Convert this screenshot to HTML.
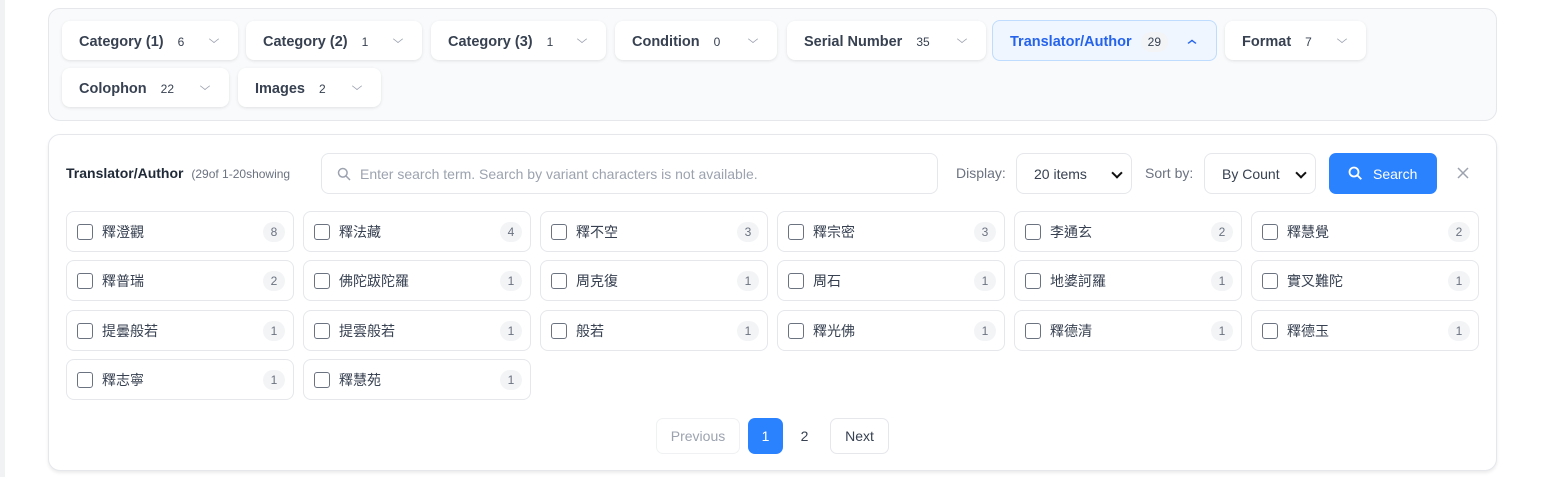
<!DOCTYPE html>
<html><head><meta charset="utf-8"><style>
*{box-sizing:border-box;margin:0;padding:0}
body{width:1541px;height:477px;background:#fff;font-family:"Liberation Sans","Noto Sans CJK TC",sans-serif;color:#374151;position:relative;overflow:hidden}
.strip{position:absolute;left:0;top:0;width:5px;height:477px;background:#f1f2f4}
.panel{position:absolute;left:48px;width:1449px;border:1px solid #e5e7eb;border-radius:12px}
.p1{top:8px;height:113px;background:#f8fafc}
.p2{top:134px;height:337px;background:#fff;box-shadow:0 2px 3px rgba(0,0,0,.08)}
.fb{position:absolute;height:39px;background:#fff;border-radius:8px;box-shadow:0 1px 3px rgba(0,0,0,.1);display:flex;align-items:center;padding-left:17px;padding-top:2px;font-size:14.5px;font-weight:bold;color:#374151}
.fb .n{font-size:12px;font-weight:normal;margin-left:14px;color:#374151}
.fb .c{position:absolute;right:20px;top:14px;width:8px;height:8px;border-right:1.5px solid #9ca3af;border-bottom:1.5px solid #9ca3af;transform:scale(.9,.7) rotate(45deg)}
.fb.act{background:#eff6ff;border:1px solid #bfdbfe;color:#2563eb;box-shadow:none}
.fb.act .n{background:#f3f4f6;border-radius:10px;padding:3px 7px;margin-left:9px;color:#374151}
.fb.act .c{border-color:#2563eb;border-width:2px;top:18px;transform:scale(.8,.6) rotate(225deg)}
.ab{position:absolute}
.inp{position:absolute;border:1px solid #e5e7eb;border-radius:8px;background:#fff;height:41px;top:153px;font-size:14px;color:#9ca3af;display:flex;align-items:center}
.sel{color:#374151;padding-left:11px}
.sel:after{content:"";position:absolute;right:10px;top:15px;width:6px;height:6px;border-right:2px solid #111;border-bottom:2px solid #111;transform:rotate(45deg)}
.cell{position:absolute;width:228px;height:41px;border:1px solid #e5e7eb;border-radius:8px;background:#fff;font-size:14px;color:#374151}
.cell .cb{position:absolute;left:10px;top:12px;width:16px;height:16px;border:1.3px solid #6b7280;border-radius:3px}
.cell .t{position:absolute;left:35px;top:10px}
.cell .b{position:absolute;right:8px;top:10px;width:22px;height:20px;border-radius:10px;background:#f3f4f6;font-size:12px;color:#6b7280;text-align:center;line-height:20px}
.pg{position:absolute;top:418px;height:36px;border-radius:7px;font-size:14px;display:flex;align-items:center;justify-content:center}
</style></head><body>
<div class="strip"></div>
<div class="panel p1"></div>
<div class="fb" style="left:62px;top:21px;width:176px">Category (1)<span class="n">6</span><span class="c"></span></div>
<div class="fb" style="left:246px;top:21px;width:176px">Category (2)<span class="n">1</span><span class="c"></span></div>
<div class="fb" style="left:431px;top:21px;width:175px">Category (3)<span class="n">1</span><span class="c"></span></div>
<div class="fb" style="left:615px;top:21px;width:162px">Condition<span class="n">0</span><span class="c"></span></div>
<div class="fb" style="left:787px;top:21px;width:199px">Serial Number<span class="n">35</span><span class="c"></span></div>
<div class="fb act" style="left:992px;top:20px;width:225px;height:41px">Translator/Author<span class="n">29</span><span class="c"></span></div>
<div class="fb" style="left:1225px;top:21px;width:141px">Format<span class="n">7</span><span class="c"></span></div>
<div class="fb" style="left:62px;top:68px;width:167px">Colophon<span class="n">22</span><span class="c"></span></div>
<div class="fb" style="left:238px;top:68px;width:143px">Images<span class="n">2</span><span class="c"></span></div>

<div class="panel p2"></div>
<div class="ab" style="left:66px;top:165px;font-size:14px;font-weight:bold;color:#1f2937">Translator/Author <span style="font-size:12px;font-weight:normal;color:#6b7280;margin-left:4px">(29of 1-20showing</span></div>
<div class="inp" style="left:321px;width:617px;padding-left:38px">Enter search term. Search by variant characters is not available.
<svg style="position:absolute;left:15px;top:13px" width="14" height="14" viewBox="0 0 14 14"><circle cx="5.8" cy="5.8" r="4.3" fill="none" stroke="#9ca3af" stroke-width="1.5"/><path d="M9 9l4 4" stroke="#9ca3af" stroke-width="1.5"/></svg></div>
<div class="ab" style="left:956px;top:165px;font-size:14px;color:#6b7280">Display:</div>
<div class="inp sel" style="left:1016px;width:116px;padding-left:17px">20 items</div>
<div class="ab" style="left:1145px;top:165px;font-size:14px;color:#6b7280">Sort by:</div>
<div class="inp sel" style="left:1204px;width:112px;padding-left:17px">By Count</div>
<div class="ab" style="left:1329px;top:153px;width:108px;height:41px;background:#2b82ff;border-radius:7px;color:#fff;font-size:14px;display:flex;align-items:center;padding-left:44px">Search
<svg style="position:absolute;left:19px;top:13px" width="15" height="15" viewBox="0 0 15 15"><circle cx="6" cy="6" r="4.5" fill="none" stroke="#fff" stroke-width="1.8"/><path d="M9.3 9.3l4 4" stroke="#fff" stroke-width="1.8"/></svg></div>
<svg class="ab" style="left:1457px;top:167px" width="12" height="12" viewBox="0 0 12 12"><path d="M1 1l10 10M11 1L1 11" stroke="#9ca3af" stroke-width="1.5"/></svg>

<div class="cell" style="left:66px;top:211px"><span class="cb"></span><span class="t">釋澄觀</span><span class="b">8</span></div>
<div class="cell" style="left:303px;top:211px"><span class="cb"></span><span class="t">釋法藏</span><span class="b">4</span></div>
<div class="cell" style="left:540px;top:211px"><span class="cb"></span><span class="t">釋不空</span><span class="b">3</span></div>
<div class="cell" style="left:777px;top:211px"><span class="cb"></span><span class="t">釋宗密</span><span class="b">3</span></div>
<div class="cell" style="left:1014px;top:211px"><span class="cb"></span><span class="t">李通玄</span><span class="b">2</span></div>
<div class="cell" style="left:1251px;top:211px"><span class="cb"></span><span class="t">釋慧覺</span><span class="b">2</span></div>
<div class="cell" style="left:66px;top:260px"><span class="cb"></span><span class="t">釋普瑞</span><span class="b">2</span></div>
<div class="cell" style="left:303px;top:260px"><span class="cb"></span><span class="t">佛陀跋陀羅</span><span class="b">1</span></div>
<div class="cell" style="left:540px;top:260px"><span class="cb"></span><span class="t">周克復</span><span class="b">1</span></div>
<div class="cell" style="left:777px;top:260px"><span class="cb"></span><span class="t">周石</span><span class="b">1</span></div>
<div class="cell" style="left:1014px;top:260px"><span class="cb"></span><span class="t">地婆訶羅</span><span class="b">1</span></div>
<div class="cell" style="left:1251px;top:260px"><span class="cb"></span><span class="t">實叉難陀</span><span class="b">1</span></div>
<div class="cell" style="left:66px;top:310px"><span class="cb"></span><span class="t">提曇般若</span><span class="b">1</span></div>
<div class="cell" style="left:303px;top:310px"><span class="cb"></span><span class="t">提雲般若</span><span class="b">1</span></div>
<div class="cell" style="left:540px;top:310px"><span class="cb"></span><span class="t">般若</span><span class="b">1</span></div>
<div class="cell" style="left:777px;top:310px"><span class="cb"></span><span class="t">釋光佛</span><span class="b">1</span></div>
<div class="cell" style="left:1014px;top:310px"><span class="cb"></span><span class="t">釋德清</span><span class="b">1</span></div>
<div class="cell" style="left:1251px;top:310px"><span class="cb"></span><span class="t">釋德玉</span><span class="b">1</span></div>
<div class="cell" style="left:66px;top:359px"><span class="cb"></span><span class="t">釋志寧</span><span class="b">1</span></div>
<div class="cell" style="left:303px;top:359px"><span class="cb"></span><span class="t">釋慧苑</span><span class="b">1</span></div>

<div class="pg" style="left:656px;width:84px;border:1px solid #f0f1f3;color:#9ca3af">Previous</div>
<div class="pg" style="left:748px;width:35px;background:#2b82ff;color:#fff">1</div>
<div class="pg" style="left:787px;width:35px;color:#374151">2</div>
<div class="pg" style="left:830px;width:59px;border:1px solid #e5e7eb;color:#374151">Next</div>
</body></html>
